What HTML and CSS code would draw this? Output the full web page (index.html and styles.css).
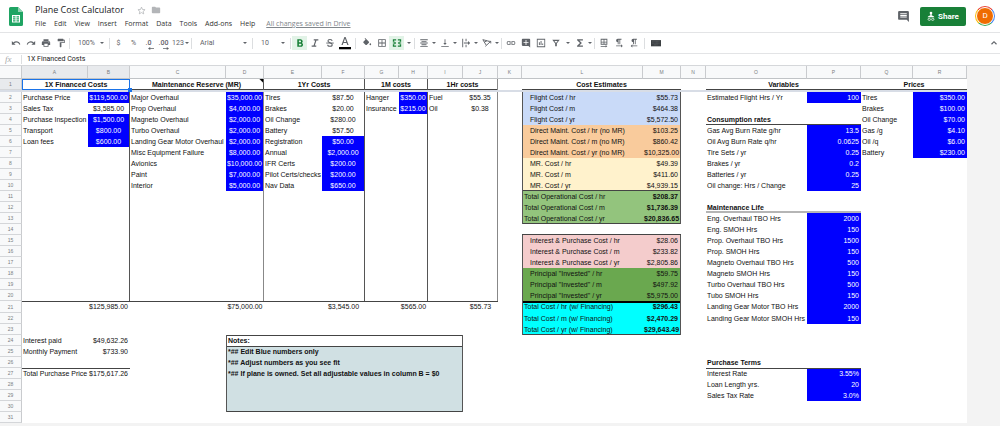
FILE: index.html
```html
<!DOCTYPE html>
<html lang="en">
<head>
<meta charset="utf-8">
<title>Plane Cost Calculator</title>
<link rel="stylesheet" href="styles.css">
</head>
<body>
<header class="titlebar">
  <svg class="logo" viewBox="0 0 14 19" aria-hidden="true"><path d="M1.5 0H9l5 5v12.5a1.5 1.5 0 0 1-1.5 1.5h-11A1.5 1.5 0 0 1 0 17.500V1.500A1.500 1.500 0 0 1 1.500 0z" fill="#1fa463"/><path d="M9 0l5 5H9z" fill="#8ed1b1"/><path d="M3 8h8v7.500H3z" fill="#fff"/><path d="M4 9.200h2.500v1.200H4zM7.500 9.200H10v1.200H7.500zM4 11.300h2.500v1.200H4zM7.500 11.300H10v1.200H7.500zM4 13.300h2.500v1.200H4zM7.500 13.300H10v1.200H7.500z" fill="#1fa463"/></svg>
  <div class="doc">
    <div class="namerow">
      <h1>Plane Cost Calculator</h1>
      <button class="plain" aria-label="Star"><svg width="9" height="9" viewBox="0 0 24 24"><path d="M12 3l2.700 6.300 6.800.6-5.200 4.500 1.600 6.600L12 17.500 6.100 21l1.600-6.600L2.500 9.900l6.800-.6z" fill="none" stroke="#b0b3b6" stroke-width="2"/></svg></button>
      <button class="plain" aria-label="Move to folder"><svg width="10" height="10" viewBox="0 0 24 24"><path d="M10 4H4a2 2 0 0 0-2 2v12c0 1.100.9 2 2 2h16a2 2 0 0 0 2-2V8a2 2 0 0 0-2-2h-8z" fill="#b3b5b8"/></svg></button>
    </div>
    <nav class="menu">
      <button>File</button><button>Edit</button><button>View</button><button>Insert</button><button>Format</button><button>Data</button><button>Tools</button><button>Add-ons</button><button>Help</button>
      <a href="#">All changes saved in Drive</a>
    </nav>
  </div>
  <div class="account">
    <button class="plain" aria-label="Comments"><svg width="13" height="13" viewBox="0 0 24 24"><path d="M22 4a2 2 0 0 0-2-2H4a2 2 0 0 0-2 2v12c0 1.100.9 2 2 2h14l4 4zM18 14H6v-2h12zm0-3H6V9h12zm0-3H6V6h12z" fill="#5f6368"/></svg></button>
    <button class="share"><svg width="8" height="10" viewBox="0 0 8 10" aria-hidden="true"><circle cx="4" cy="2" r="1.300" fill="#fff"/><path d="M3.300 3h1.400v1.400c1.600.2 2.600.9 2.600 1.900H.7c0-1 1-1.700 2.600-1.900z" fill="#fff"/><path d="M3.300 7.300H2a1 1 0 0 0 0 2h1.300M4.700 7.300H6a1 1 0 0 1 0 2H4.700M3 8.300h2" fill="none" stroke="#fff" stroke-width=".7"/></svg>Share</button>
    <button class="avatar" aria-label="Account"><span>D</span></button>
  </div>
</header>

<div class="toolbar" role="toolbar" aria-label="Formatting">
  <button aria-label="Undo"><svg viewBox="0 0 24 24"><path d="M12.500 8c-2.600 0-5 1-6.900 2.600L2 7v9h9l-3.600-3.600A8 8 0 0 1 20 16l2.400-.8A10.500 10.500 0 0 0 12.500 8z"/></svg></button>
  <button aria-label="Redo"><svg viewBox="0 0 24 24"><path d="M18.400 10.600A10.500 10.500 0 0 0 1.600 15.200L4 16a8 8 0 0 1 12.600-3.600L13 16h9V7z"/></svg></button>
  <button aria-label="Print"><svg viewBox="0 0 24 24"><path d="M19 8H5a3 3 0 0 0-3 3v6h4v4h12v-4h4v-6a3 3 0 0 0-3-3zm-3 11H8v-5h8zm3-7a1 1 0 1 1 0-2 1 1 0 0 1 0 2zM18 3H6v4h12z"/></svg></button>
  <button aria-label="Paint format"><svg viewBox="0 0 24 24"><path d="M18 4V3a1 1 0 0 0-1-1H5a1 1 0 0 0-1 1v4c0 .6.500 1 1 1h12c.6 0 1-.4 1-1V6h1v4H9v11c0 .6.500 1 1 1h2c.6 0 1-.4 1-1v-9h8V4z"/></svg></button>
  <i class="sep"></i>
  <span class="pick zoom"><select aria-label="Zoom"><option>100%</option></select></span>
  <i class="sep"></i>
  <button>$</button><button>%</button>
  <button class="dec" aria-label="Decrease decimals">.0<svg viewBox="0 0 8 4"><path d="M3 0v1.500h5v1H3V4L0 2z"/></svg></button>
  <button class="dec" aria-label="Increase decimals">.00<svg viewBox="0 0 8 4"><path d="M5 0v1.500H0v1h5V4l3-2z"/></svg></button>
  <button class="formats">123<i class="arrow"></i></button>
  <i class="sep"></i>
  <span class="pick font"><select aria-label="Font"><option>Arial</option></select></span>
  <i class="sep"></i>
  <span class="pick size"><select aria-label="Font size"><option>10</option></select></span>
  <i class="sep"></i>
  <button class="on" aria-label="Bold" aria-pressed="true"><svg viewBox="0 0 24 24"><path d="M16.600 11.800c1-.8 1.900-2 1.900-3.300C18.500 5.500 16.200 3 13 3H5.500v18H14c3 0 5.300-2.200 5.300-5.100 0-1.900-1.100-3.400-2.700-4.100zM9.300 6h3.200a2 2 0 0 1 0 4.200H9.300zm3.900 12H9.300v-4.500h3.900a2.200 2.200 0 0 1 0 4.500z"/></svg></button>
  <button aria-label="Italic"><svg viewBox="0 0 24 24"><path d="M9 3v3h3.500l-4 12H4v3h11v-3h-3.500l4-12H20V3z"/></svg></button>
  <button aria-label="Strikethrough"><svg viewBox="0 0 24 24"><path d="M3 11h18v2.200H3z"/><path d="M17 7c0-2-2-3.300-5-3.300S7 5.200 7 7.300c0 5 10.300 3 10.300 8.700 0 2.500-2.300 4-5.300 4s-5.500-1.500-5.500-4" fill="none" stroke="#5f6368" stroke-width="2.500"/></svg></button>
  <button aria-label="Text color"><svg class="tall" viewBox="0 0 12 14"><path d="M5.400 1h1.200l3 8H8.300l-.7-2H4.400l-.7 2H2.400zM6 2.600L4.800 6h2.400z"/><path d="M0 11h12v2.300H0z" fill="#000"/></svg></button>
  <i class="sep wide"></i>
  <button aria-label="Fill color"><svg viewBox="0 0 24 24"><path d="M16.600 9L7.600 0 6.200 1.400l2.400 2.400-5.200 5.100c-.6.600-.6 1.500 0 2.200l5.500 5.500c.6.500 1.500.5 2.100 0l5.600-5.500c.5-.7.500-1.600 0-2.100zM20 12s-2 2.200-2 3.500a2 2 0 0 0 4 0c0-1.300-2-3.500-2-3.500z"/></svg></button>
  <button aria-label="Borders"><svg viewBox="0 0 24 24"><path d="M3 3v18h18V3zm8 16H5v-6h6zm0-8H5V5h6zm8 8h-6v-6h6zm0-8h-6V5h6z"/></svg></button>
  <button class="on" aria-label="Merge cells" aria-pressed="true"><svg viewBox="0 0 24 24"><path d="M2 3h8v3H5v3H2zM14 3h8v6h-3V6h-5zM2 15h3v3h5v3H2zM19 15h3v6h-8v-3h5zM2 11h4V8l4 4-4 4v-3H2zM22 11h-4V8l-4 4 4 4v-3h4z"/></svg></button>
  <button class="drop mid" aria-label="Merge options"><i class="arrow"></i></button>
  <i class="sep"></i>
  <button aria-label="Horizontal align"><svg viewBox="0 0 24 24"><path d="M3 3h18v2.200H3zM6 7h12v2.200H6zM3 11h18v2.200H3zM6 15h12v2.200H6zM3 19h18v2.200H3z"/></svg></button><button class="drop" aria-label="Align options"><i class="arrow"></i></button>
  <button aria-label="Vertical align"><svg viewBox="0 0 24 24"><path d="M16 12h-3V3h-2v9H8l4 5zM3 19h18v2.200H3z"/></svg></button><button class="drop" aria-label="Vertical options"><i class="arrow"></i></button>
  <button aria-label="Text wrapping"><svg viewBox="0 0 24 24"><path d="M3 2h2.200v20H3zM11 2h2.200v6H11zM11 16h2.200v6H11zM7 11h10V7l5 5-5 5v-4H7z"/></svg></button><button class="drop" aria-label="Wrapping options"><i class="arrow"></i></button>
  <button aria-label="Text rotation"><svg viewBox="0 0 24 24"><path d="M2 4l8 13M2 4l15 4M5.500 10l6.500-3.500M8 20L21 8M16 8h5v5" fill="none" stroke="#5f6368" stroke-width="2.200"/></svg></button><button class="drop" aria-label="Rotation options"><i class="arrow"></i></button>
  <i class="sep"></i>
  <button aria-label="Insert link"><svg viewBox="0 0 24 24"><path d="M3.500 12c0-1.700 1.400-3.100 3.100-3.100H11V7H6.500a5 5 0 0 0 0 10H11v-1.900H6.600A3.100 3.100 0 0 1 3.500 12zM8 13h8v-2H8zm9.500-6H13v1.900h4.400a3.100 3.100 0 0 1 0 6.200H13V17h4.500a5 5 0 0 0 0-10z"/></svg></button>
  <button aria-label="Insert comment"><svg viewBox="0 0 24 24"><path d="M22 4a2 2 0 0 0-2-2H4a2 2 0 0 0-2 2v13c0 1.100.9 2 2 2h14l4 4zM18 12h-5v5h-2v-5H6v-2h5V5h2v5h5z"/></svg></button>
  <button aria-label="Insert chart"><svg viewBox="0 0 24 24"><path d="M2 2v20h20V2zm18 18H4V4h16zM7 10h2.200v7H7zM11 7h2.200v10H11zM15 13h2.200v4H15z"/></svg></button>
  <button aria-label="Filter"><svg viewBox="0 0 24 24"><path d="M3 4h18l-7 9v7h-4v-7zM8 7l4 5 4-5z" fill-rule="evenodd"/></svg></button><button class="drop mid" aria-label="Filter views"><i class="arrow"></i></button>
  <button aria-label="Functions"><svg viewBox="0 0 24 24"><path d="M19 3H5v2.500l7 6.500-7 6.500V21h14v-3h-8.500l6-6-6-6H19z"/></svg></button><button class="drop" aria-label="More functions"><i class="arrow"></i></button>
  <i class="sep"></i>
  <button aria-label="Sheet direction"><svg viewBox="0 0 24 24"><path d="M4 2v14h16V2zm7 12H6v-3h5zm0-5H6V4h5zm7 5h-5v-3h5zm0-5h-5V4h5zM4 19h12v-2l4 3-4 3v-2H4z"/></svg></button>
  <button aria-label="Left to right"><svg viewBox="0 0 24 24"><path d="M9 10v5h2V4h2v11h2V4h3V2H9a4 4 0 0 0 0 8zM21 19l-4-4v3H5v2h12v3z"/></svg></button>
  <button aria-label="Right to left"><svg viewBox="0 0 24 24"><path d="M10 10v5h2V4h2v11h2V4h3V2h-9a4 4 0 0 0 0 8zM8 18v-3l-4 4 4 4v-3h12v-2z"/></svg></button>
  <i class="sep wide"></i>
  <button aria-label="Input tools"><svg viewBox="0 0 24 24"><path d="M0 5h24v15H0z" fill="#3c4043"/><path d="M3 9h18M3 12.500h18M7 16.500h10" stroke="#75787c" stroke-width="1.200" stroke-dasharray="2 1"/></svg></button>
  <button class="collapse" aria-label="Hide menus"><svg viewBox="0 0 24 24"><path d="M12 7l-7 7 2 2 5-5 5 5 2-2z"/></svg></button>
</div>

<div class="formula">
  <label for="fx">fx</label>
  <input id="fx" type="text" value="1X Financed Costs">
</div>

<main class="grid">
<table>
<colgroup><col class="w22"><col class="w66"><col class="w42"><col class="w96"><col class="w38"><col class="w58"><col class="w43"><col class="w34"><col class="w29"><col class="w35"><col class="w35"><col class="w24"><col class="w121"><col class="w38"><col class="w25"><col class="w101"><col class="w54"><col class="w52"><col class="w54"></colgroup>
<thead>
<tr><th></th><th class="sel">A</th><th class="sel">B</th><th>C</th><th>D</th><th>E</th><th>F</th><th>G</th><th>H</th><th>I</th><th>J</th><th>K</th><th>L</th><th>M</th><th>N</th><th>O</th><th>P</th><th>Q</th><th>R</th></tr>
</thead>
<tbody>
<tr class="heads"><th class="sel">1</th><td colspan="2" class="active">1X Financed Costs<i class="handle"></i></td><td colspan="2" class="u v note">Maintenance Reserve (MR)</td><td colspan="2" class="u v">1Yr Costs</td><td colspan="2" class="u v">1M costs</td><td colspan="2" class="u vg">1Hr costs</td><td></td><td colspan="2" class="u">Cost Estimates</td><td></td><td colspan="2" class="u">Variables</td><td colspan="2" class="u">Prices</td></tr>
<tr class="freeze"><td colspan="19"></td></tr>
<tr><th>2</th><td>Purchase Price</td><td class="c in v">$119,500.00</td><td>Major Overhaul</td><td class="c in vg">$35,000.00</td><td>Tires</td><td class="c v">$87.50</td><td>Hanger</td><td class="c in v">$350.00</td><td>Fuel</td><td class="c vg">$55.35</td><td></td><td class="flight l ind">Flight Cost / hr</td><td class="flight r v">$55.73</td><td></td><td>Estimated Flight Hrs / Yr</td><td class="r in">100</td><td>Tires</td><td class="r in">$350.00</td></tr>
<tr><th>3</th><td>Sales Tax</td><td class="c v">$3,585.00</td><td>Prop Overhaul</td><td class="c in vg">$4,000.00</td><td>Brakes</td><td class="c v">$20.00</td><td>Insurance</td><td class="c in v">$215.00</td><td>Oil</td><td class="c vg">$0.38</td><td></td><td class="flight l ind">Flight Cost / m</td><td class="flight r v">$464.38</td><td></td><td></td><td></td><td>Brakes</td><td class="r in">$100.00</td></tr>
<tr><th>4</th><td>Purchase Inspection</td><td class="c in v">$1,500.00</td><td>Magneto Overhaul</td><td class="c in vg">$2,000.00</td><td>Oil Change</td><td class="c v">$280.00</td><td colspan="2" class="v"></td><td colspan="2" class="vg"></td><td></td><td class="flight l ind">Flight Cost / yr</td><td class="flight r v">$5,572.50</td><td></td><td class="u bold">Consumption rates</td><td class="u"></td><td>Oil Change</td><td class="r in">$70.00</td></tr>
<tr><th>5</th><td>Transport</td><td class="c in v">$800.00</td><td>Turbo Overhaul</td><td class="c in vg">$2,000.00</td><td>Battery</td><td class="c v">$57.50</td><td colspan="2" class="v"></td><td colspan="2" class="vg"></td><td></td><td class="maint l ind">Direct Maint. Cost / hr (no MR)</td><td class="maint r v">$103.25</td><td></td><td>Gas Avg Burn Rate g/hr</td><td class="r in">13.5</td><td>Gas /g</td><td class="r in">$4.10</td></tr>
<tr><th>6</th><td>Loan fees</td><td class="c in v">$600.00</td><td>Landing Gear Motor Overhaul</td><td class="c in vg">$2,000.00</td><td>Registration</td><td class="c in v">$50.00</td><td colspan="2" class="v"></td><td colspan="2" class="vg"></td><td></td><td class="maint l ind">Direct Maint. Cost / m (no MR)</td><td class="maint r v">$860.42</td><td></td><td>Oil Avg Burn Rate q/hr</td><td class="r in">0.0625</td><td>Oil /q</td><td class="r in">$6.00</td></tr>
<tr><th>7</th><td colspan="2" class="v"></td><td>Misc Equipment Failure</td><td class="c in vg">$8,000.00</td><td>Annual</td><td class="c in v">$2,000.00</td><td colspan="2" class="v"></td><td colspan="2" class="vg"></td><td></td><td class="maint l ind">Direct Maint. Cost / yr (no MR)</td><td class="maint r v">$10,325.00</td><td></td><td>Tire Sets / yr</td><td class="r in">0.25</td><td>Battery</td><td class="r in">$230.00</td></tr>
<tr><th>8</th><td colspan="2" class="v"></td><td>Avionics</td><td class="c in vg">$10,000.00</td><td>IFR Certs</td><td class="c in v">$200.00</td><td colspan="2" class="v"></td><td colspan="2" class="vg"></td><td></td><td class="mr l ind">MR. Cost / hr</td><td class="mr r v">$49.39</td><td></td><td>Brakes / yr</td><td class="r in">0.2</td><td colspan="2"></td></tr>
<tr><th>9</th><td colspan="2" class="v"></td><td>Paint</td><td class="c in vg">$7,000.00</td><td>Pilot Certs/checks</td><td class="c in v">$200.00</td><td colspan="2" class="v"></td><td colspan="2" class="vg"></td><td></td><td class="mr l ind">MR. Cost / m</td><td class="mr r v">$411.60</td><td></td><td>Batteries / yr</td><td class="r in">0.25</td><td colspan="2"></td></tr>
<tr><th>10</th><td colspan="2" class="v"></td><td>Interior</td><td class="c in vg">$5,000.00</td><td>Nav Data</td><td class="c in v">$650.00</td><td colspan="2" class="v"></td><td colspan="2" class="vg"></td><td></td><td class="mr l u ind">MR. Cost / yr</td><td class="mr r u v">$4,939.15</td><td></td><td>Oil change: Hrs / Change</td><td class="r in">25</td><td colspan="2"></td></tr>
<tr><th>11</th><td colspan="2" class="v"></td><td colspan="2" class="vg"></td><td colspan="2" class="v"></td><td colspan="2" class="v"></td><td colspan="2" class="vg"></td><td></td><td class="oper l">Total Operational Cost / hr</td><td class="oper r v bold">$208.37</td><td colspan="5"></td></tr>
<tr><th>12</th><td colspan="2" class="v"></td><td colspan="2" class="vg"></td><td colspan="2" class="v"></td><td colspan="2" class="v"></td><td colspan="2" class="vg"></td><td></td><td class="oper l">Total Operational Cost / m</td><td class="oper r v bold">$1,736.39</td><td></td><td class="ug bold">Maintenance Life</td><td class="ug"></td><td colspan="2"></td></tr>
<tr><th>13</th><td colspan="2" class="v"></td><td colspan="2" class="vg"></td><td colspan="2" class="v"></td><td colspan="2" class="v"></td><td colspan="2" class="vg"></td><td></td><td class="oper l u">Total Operational Cost / yr</td><td class="oper r u v bold">$20,836.65</td><td></td><td>Eng. Overhaul TBO Hrs</td><td class="r in">2000</td><td colspan="2"></td></tr>
<tr><th>14</th><td colspan="2" class="v"></td><td colspan="2" class="vg"></td><td colspan="2" class="v"></td><td colspan="2" class="v"></td><td colspan="2" class="vg"></td><td></td><td class="u" colspan="2"></td><td></td><td>Eng. SMOH Hrs</td><td class="r in">150</td><td colspan="2"></td></tr>
<tr><th>15</th><td colspan="2" class="v"></td><td colspan="2" class="vg"></td><td colspan="2" class="v"></td><td colspan="2" class="v"></td><td colspan="2" class="vg"></td><td></td><td class="interest l ind">Interest &amp; Purchase Cost / hr</td><td class="interest r v">$28.06</td><td></td><td>Prop. Overhaul TBO Hrs</td><td class="r in">1500</td><td colspan="2"></td></tr>
<tr><th>16</th><td colspan="2" class="v"></td><td colspan="2" class="vg"></td><td colspan="2" class="v"></td><td colspan="2" class="v"></td><td colspan="2" class="vg"></td><td></td><td class="interest l ind">Interest &amp; Purchase Cost / m</td><td class="interest r v">$233.82</td><td></td><td>Prop. SMOH Hrs</td><td class="r in">150</td><td colspan="2"></td></tr>
<tr><th>17</th><td colspan="2" class="v"></td><td colspan="2" class="vg"></td><td colspan="2" class="v"></td><td colspan="2" class="v"></td><td colspan="2" class="vg"></td><td></td><td class="interest l ind">Interest &amp; Purchase Cost / yr</td><td class="interest r v">$2,805.86</td><td></td><td>Magneto Overhaul TBO Hrs</td><td class="r in">500</td><td colspan="2"></td></tr>
<tr><th>18</th><td colspan="2" class="v"></td><td colspan="2" class="vg"></td><td colspan="2" class="v"></td><td colspan="2" class="v"></td><td colspan="2" class="vg"></td><td></td><td class="principal l ind">Principal "Invested" / hr</td><td class="principal r v">$59.75</td><td></td><td>Magneto SMOH Hrs</td><td class="r in">150</td><td colspan="2"></td></tr>
<tr><th>19</th><td colspan="2" class="v"></td><td colspan="2" class="vg"></td><td colspan="2" class="v"></td><td colspan="2" class="v"></td><td colspan="2" class="vg"></td><td></td><td class="principal l ind">Principal "Invested" / m</td><td class="principal r v">$497.92</td><td></td><td>Turbo Overhaul TBO Hrs</td><td class="r in">500</td><td colspan="2"></td></tr>
<tr><th>20</th><td colspan="2" class="v"></td><td colspan="2" class="vg"></td><td colspan="2" class="v"></td><td colspan="2" class="v"></td><td colspan="2" class="vg"></td><td></td><td class="principal l ind">Principal "Invested" / yr</td><td class="principal r v">$5,975.00</td><td></td><td>Tubo SMOH Hrs</td><td class="r in">150</td><td colspan="2"></td></tr>
<tr class="sums"><th>21</th><td class="t"></td><td class="t r">$125,985.00</td><td class="t"></td><td class="t c">$75,000.00</td><td class="t"></td><td class="t c">$3,545.00</td><td class="t"></td><td class="t c">$565.00</td><td class="t"></td><td class="t c">$55.73</td><td></td><td class="total l tt">Total Cost / hr (w/ Financing)</td><td class="total r v tt bold">$296.43</td><td></td><td>Landing Gear Motor TBO Hrs</td><td class="r in">2000</td><td colspan="2"></td></tr>
<tr><th>22</th><td colspan="11"></td><td class="total l">Total Cost / m (w/ Financing)</td><td class="total r v bold">$2,470.29</td><td></td><td>Landing Gear Motor SMOH Hrs</td><td class="r in">150</td><td colspan="2"></td></tr>
<tr><th>23</th><td colspan="11"></td><td class="total l u">Total Cost / yr (w/ Financing)</td><td class="total r u v bold">$29,643.49</td><td colspan="5"></td></tr>
<tr><th>24</th><td>Interest paid</td><td class="r">$49,632.26</td><td></td><td colspan="6" class="t l v bold">Notes:</td><td colspan="9"></td></tr>
<tr><th>25</th><td>Monthly Payment</td><td class="r">$733.90</td><td></td><td colspan="6" class="t l v notes">*## Edit Blue numbers only</td><td colspan="9"></td></tr>
<tr><th>26</th><td colspan="3"></td><td colspan="6" class="l v notes">*## Adjust numbers as you see fit</td><td colspan="5"></td><td class="bold">Purchase Terms</td><td colspan="3"></td></tr>
<tr><th>27</th><td class="t">Total Purchase Price</td><td class="t r">$175,617.26</td><td></td><td colspan="6" class="l v notes">*## If plane is owned. Set all adjustable values in column B = $0</td><td colspan="5"></td><td class="t">Interest Rate</td><td class="t r in">3.55%</td><td colspan="2"></td></tr>
<tr><th>28</th><td colspan="3"></td><td colspan="6" class="l v notes"></td><td colspan="5"></td><td>Loan Length yrs.</td><td class="r in">20</td><td colspan="2"></td></tr>
<tr><th>29</th><td colspan="3"></td><td colspan="6" class="l v notes"></td><td colspan="5"></td><td>Sales Tax Rate</td><td class="r in">3.0%</td><td colspan="2"></td></tr>
<tr><th>30</th><td colspan="3"></td><td colspan="6" class="l v u notes"></td><td colspan="9"></td></tr>
<tr><th>31</th><td colspan="18"></td></tr>
</tbody>
</table>
</main>
</body>
</html>
```
FILE: styles.css
```css
* { box-sizing: border-box; }
body {
  margin: 0;
  min-height: 100vh;
  background: #f3f3f3;
  color: #111;
  font-family: Roboto, "Liberation Sans", sans-serif;
  font-size: 7px;
  overflow: hidden;
}
button {
  padding: 0;
  border: 0;
  background: none;
  font: inherit;
  color: inherit;
}
svg { display: block; }

/* Title bar */
.titlebar {
  display: flex;
  align-items: center;
  height: 33px;
  padding: 0 5px 0 9px;
  background: #fff;
  border-bottom: 1px solid #e3e4e6;
}
.logo { width: 14px; height: 19px; margin-right: 12px; }
.doc { flex: 1; padding-top: 1px; }
.namerow { display: flex; align-items: center; gap: 5px; height: 14px; }
h1 {
  margin: 0 8px 0 0;
  font: 400 9px/14px "Open Sans", sans-serif;
  color: #202124;
}
.menu {
  display: flex;
  gap: 8px;
  height: 13px;
  font-family: "Open Sans", sans-serif;
  line-height: 13px;
  color: #333;
}
.menu a { margin-left: 3px; color: #80868b; }
.account { display: flex; align-items: center; }
.share {
  display: flex;
  align-items: center;
  justify-content: center;
  gap: 3px;
  width: 46px;
  height: 19px;
  margin: 0 9px 0 10px;
  border-radius: 2px;
  background: #188038;
  color: #fff;
  font-weight: 700;
  font-size: 8px;
}
.avatar {
  width: 20px;
  height: 20px;
  padding: 1px;
  border-radius: 50%;
  background: conic-gradient(from 45deg, #4285f4 0 25%, #34a853 0 50%, #fbbc05 0 75%, #ea4335 0);
}
.avatar span {
  display: block;
  border: 1px solid #fff;
  border-radius: 50%;
  background: #ef6c00;
  color: #fff;
  font-size: 8px;
  line-height: 16px;
}

/* Toolbar */
.toolbar {
  display: flex;
  align-items: center;
  height: 21px;
  padding: 0 0 0 8px;
  background: #fff;
  border-bottom: 1px solid #e3e4e6;
  color: #5f6368;
  font-size: 7px;
}
.toolbar button {
  display: flex;
  flex: none;
  align-items: center;
  justify-content: center;
  width: 15px;
  height: 14px;
}
.toolbar svg { width: 10px; height: 10px; fill: #5f6368; }
.toolbar .on { background: #e2f3e7; }
.toolbar .on svg { fill: #188038; }
.toolbar svg.tall { width: 12px; height: 14px; }
.toolbar .dec {
  flex-direction: column;
  justify-content: flex-end;
  line-height: 7px;
  font-weight: 500;
}
.toolbar .dec svg { width: 6px; height: 3px; margin-left: 5px; }
.toolbar .formats { width: 19px; gap: 1px; }
.toolbar .drop { width: 6px; }
.toolbar .drop.mid { width: 9px; }
.toolbar .collapse { width: 12px; margin-left: auto; }
.sep { width: 1px; height: 11px; margin: 0 1px; background: #dcdee0; }
.sep.wide { margin: 0 3px; }
.arrow, .pick::after {
  flex: none;
  border: 2px solid transparent;
  border-top-color: #5f6368;
  border-bottom: 0;
}
.pick { display: flex; align-items: center; }
.pick::after { content: ""; margin-right: 4px; }
.pick select {
  flex: 1;
  min-width: 0;
  padding: 0 0 0 7px;
  border: 0;
  appearance: none;
  background: none;
  color: #5f6368;
  font: inherit;
}
.zoom { width: 37px; }
.font { width: 58px; }
.size { width: 35px; }

/* Formula bar */
.formula {
  display: flex;
  align-items: center;
  height: 12px;
  background: #fff;
  border-bottom: 1px solid #d5d7da;
}
.formula label {
  width: 22px;
  padding-left: 5px;
  border-right: 1px solid #dcdee0;
  color: #a5a8ab;
  font: italic 9px/9px "Liberation Serif", serif;
}
.formula input {
  flex: 1;
  min-width: 0;
  height: 11px;
  padding: 0 5px;
  border: 0;
  outline: 0;
  background: none;
  color: #222;
  font: 7px/11px Roboto, sans-serif;
}

/* Sheet */
table {
  width: 967px;
  table-layout: fixed;
  border-collapse: separate;
  border-spacing: 0;
  background: #fff;
  font: 7px/10px "Liberation Sans", Arial, sans-serif;
}
.w22 { width: 22px; }
.w24 { width: 24px; }
.w25 { width: 25px; }
.w29 { width: 29px; }
.w34 { width: 34px; }
.w35 { width: 35px; }
.w38 { width: 38px; }
.w42 { width: 42px; }
.w43 { width: 43px; }
.w52 { width: 52px; }
.w54 { width: 54px; }
.w58 { width: 58px; }
.w66 { width: 66px; }
.w96 { width: 96px; }
.w101 { width: 101px; }
.w121 { width: 121px; }
td, th { height: 11px; padding: 0 1px; white-space: nowrap; }
td { text-align: left; }
th {
  padding: 0;
  border-right: 1px solid #c9cbce;
  border-bottom: 1px solid #d4d6d9;
  background: #f8f9fa;
  color: #7a7d81;
  font-weight: 400;
  font-size: 5px;
  text-align: center;
}
thead th { height: 13px; border-bottom-color: #c0c3c6; }
th.sel { background: #e8eaed; }
.heads td { text-align: center; font-weight: 700; }
.freeze td { height: 2px; padding: 0; background: #d8dde6; line-height: 0; }
.sums td, .sums th { height: 12px; }
td.c { text-align: center; padding: 0; }
td.r { padding-right: 2px; text-align: right; }
td.bold, td.notes { font-weight: 700; }
td.ind { padding-left: 7px; }
.u { box-shadow: inset 0 -1px #444; }
.ug { box-shadow: inset 0 -2px #b5b5b5; }
.t { box-shadow: inset 0 1px #444; }
.tt { box-shadow: inset 0 2px #000; }
.v { border-right: 1px solid #555; }
.vg { border-right: 1px solid #888; }
.l { border-left: 1px solid #555; }
td.in { background: #00f; color: #fff; }
.flight { background: #c9daf8; }
.maint { background: #f9cb9c; }
.mr { background: #fff2cc; }
.oper { background: #93c47d; }
.interest { background: #f4cccc; }
.principal { background: #6aa84f; }
.total { background: #0ff; }
.notes { background: #d0e0e3; }
.active { position: relative; box-shadow: inset 0 0 0 1px #1a73e8; }
.handle {
  position: absolute;
  right: -2px;
  bottom: -2px;
  width: 4px;
  height: 4px;
  background: #1a73e8;
}
.note {
  background: linear-gradient(225deg, #000 0 2px, transparent 3px) no-repeat;
}
```
